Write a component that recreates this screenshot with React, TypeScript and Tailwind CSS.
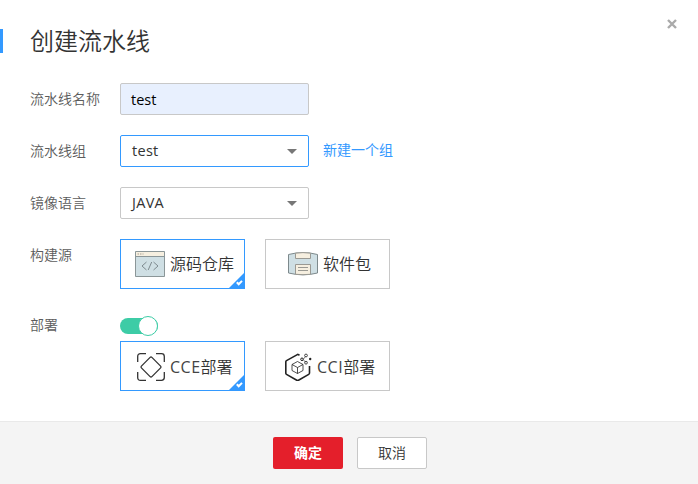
import type { ReactNode } from "react";

function Label({ children }: { children: ReactNode }) {
  return <div className="w-[90px] shrink-0 text-[14px] leading-8 font-[350] text-[#5c5c5c]">{children}</div>;
}

function Caret() {
  return (
    <svg className="mr-[11px] h-[5px] w-[10px]" viewBox="0 0 10 5">
      <path d="M0 0h10L5 5z" fill="#777" />
    </svg>
  );
}

function Select({ value, active }: { value: string; active?: boolean }) {
  return (
    <div
      className={`flex h-8 w-[189px] items-center justify-between rounded-[2px] border pl-[11px] text-[14.5px] text-[#333] ${
        active ? "border-[#3399ff]" : "border-[#c8c8c8]"
      }`}
    >
      <span className="leading-5 tracking-[0.3px]">{value}</span>
      <Caret />
    </div>
  );
}

function Card({ children, selected }: { children: ReactNode; selected?: boolean }) {
  return (
    <div
      className={`relative flex h-[50px] w-[125px] items-center border text-[16px] leading-6 font-[350] text-[#333] ${
        selected ? "border-[#3399ff]" : "border-[#c8c8c8]"
      }`}
    >
      {children}
      {selected && (
        <svg className="absolute -right-px -bottom-px h-[17px] w-[17px]" viewBox="0 0 17 17">
          <path d="M17 0v17H0z" fill="#3399ff" />
          <path d="M8.800 10.300l1.900 2 3.300-3.400" fill="none" stroke="#fff" strokeWidth="2" />
        </svg>
      )}
    </div>
  );
}

function SourceIcon() {
  return (
    <svg className="ml-[14px] h-[28px] w-[30px]" viewBox="0 0 30 28">
      <path d="M.5 1h29v26H.5z" fill="#cfdfe4" />
      <path d="M1 1h28v5H1z" fill="#f6efe0" />
      <path d="M.5 1.500h29v25H.5zM1 6.500h28" fill="none" stroke="#8b9698" />
      <path d="M2.500 4h6" stroke="#a79e92" strokeDasharray="1.5 1" />
      <path d="M11.500 12L7 16l4.500 4M18.500 12l4.500 4-4.500 4M16.700 12l-3.500 8" fill="none" stroke="#7f8b90" />
    </svg>
  );
}

function PackageIcon() {
  return (
    <svg className="ml-[22px] h-[24px] w-[30px]" viewBox="0 0 30 24">
      <path d="M.5 2.500Q15-1.300 29.500 2.500v18.500Q15 24.700.5 21z" fill="#cfdfe4" stroke="#7d898c" />
      <path d="M7.500 1.200Q15 0 22.500 1.200v5.300h-15zM7.500 12.500h15V22.300Q15 23 7.500 22.300z" fill="#f6efe0" stroke="#9a9993" />
      <path d="M10 15.500h10M10 18.500h10" stroke="#9a9993" />
    </svg>
  );
}

function CceIcon() {
  return (
    <svg className="mt-[2px] ml-4 h-7 w-7" viewBox="0 0 28 28" fill="none" stroke="#333" strokeWidth="1.300">
      <path d="M.7 9V3.500Q.7.700 3.500.700H9M19 .7h5.500q2.800 0 2.800 2.800V9M27.300 19v5.500q0 2.800-2.800 2.800H19M9 27.300H3.500Q.7 27.300.7 24.500V19" />
      <path d="M13.100 4.400q.9-.9 1.800 0l8.700 8.700q.9.900 0 1.800l-8.700 8.700q-.9.900-1.800 0l-8.700-8.700q-.9-.9 0-1.800z" />
    </svg>
  );
}

function CciIcon() {
  return (
    <svg className="mt-[2px] ml-[19px] h-7 w-[27px]" viewBox="0 0 27 28" fill="none" stroke="#222">
      <path d="M14.500 2.300L12.800 1.300 1.500 7.600Q.8 8 .8 8.700v11.500q0 .8.700 1.200l10.300 5.800q.8.500 1.700 0l10.200-5.800q.8-.5.800-1.300V13" strokeWidth="1.600" />
      <path d="M7 11.500l5.500-3 5.500 3v6l-5.500 3-5.500-3zM7 11.500l5.500 3 5.500-3M12.500 14.500v6" strokeWidth=".8" />
      <path d="M18 6.500l2.500-3M18.500 7l2.500 2.500" strokeWidth=".6" />
      <circle cx="17" cy="6.300" r="1.300" />
      <circle cx="21" cy="2.500" r="1.400" strokeWidth=".8" />
      <circle cx="21" cy="9.700" r="1.400" strokeWidth=".8" />
      <circle cx="25.200" cy="6" r="1.200" fill="#222" stroke="none" />
    </svg>
  );
}

export default function App() {
  return (
    <div className="flex h-[484px] w-[698px] flex-col bg-white font-['Open_Sans','Noto_Sans_CJK_SC',sans-serif]">
      <div className="flex h-[83px] items-start justify-between pt-[23px]">
        <div className="flex items-center">
          <div className="h-6 w-[3px] bg-[#3399ff]" />
          <h1 className="ml-[27px] text-[24px] leading-9 font-[350] text-[#333]">创建流水线</h1>
        </div>
        <svg className="-mt-1 mr-[21px] h-[10px] w-[10px]" viewBox="0 0 10 10">
          <path d="M1 1l8 8M9 1L1 9" stroke="#aaa" strokeWidth="2.400" />
        </svg>
      </div>
      <div className="flex h-[338px] flex-col px-[30px]">
        <div className="mb-5 flex">
          <Label>流水线名称</Label>
          <div className="flex h-8 w-[189px] items-center rounded-[2px] border border-[#c8c8c8] bg-[#e8f0fe] pt-px pl-[10px] text-[14.5px] text-black">
            <span className="leading-5">test</span>
          </div>
        </div>
        <div className="mb-5 flex">
          <Label>流水线组</Label>
          <Select value="test" active />
          <span className="ml-[14px] text-[14px] leading-[30px] text-[#3399ff]">新建一个组</span>
        </div>
        <div className="mb-5 flex">
          <Label>镜像语言</Label>
          <Select value="JAVA" />
        </div>
        <div className="mb-5 flex">
          <Label>构建源</Label>
          <div className="flex gap-5">
            <Card selected>
              <SourceIcon />
              <span className="ml-[5px]">源码仓库</span>
            </Card>
            <Card>
              <PackageIcon />
              <span className="ml-[5px]">软件包</span>
            </Card>
          </div>
        </div>
        <div className="flex">
          <Label>部署</Label>
          <div className="pt-[7px]">
            <div className="mb-[5px] flex h-5 w-[38px] items-center">
              <div className="flex h-4 w-[38px] items-center justify-end rounded-full bg-[#3dcca6]">
                <div className="h-5 w-5 rounded-full border border-[#3dcca6] bg-white" />
              </div>
            </div>
            <div className="flex gap-5">
              <Card selected>
                <CceIcon />
                <span className="mt-[2px] ml-[5px]">
                  <span className="font-normal tracking-[0.5px] text-[#444]">CCE</span>部署
                </span>
              </Card>
              <Card>
                <CciIcon />
                <span className="mt-[2px] ml-[5px]">
                  <span className="font-normal tracking-[0.5px] text-[#444]">CCI</span>部署
                </span>
              </Card>
            </div>
          </div>
        </div>
      </div>
      <div className="flex flex-1 justify-center gap-[14px] border-t border-[#e9e9e9] bg-[#f4f4f4] pt-[15px] pl-[2px]">
        <button className="h-8 w-[70px] rounded-[2px] bg-[#e41f2b] pb-[2px] text-[14px] font-bold text-white">确定</button>
        <button className="h-8 w-[70px] rounded-[2px] border border-[#c8c8c8] bg-white pb-[2px] text-[14px] font-[350] text-[#333]">取消</button>
      </div>
    </div>
  );
}
